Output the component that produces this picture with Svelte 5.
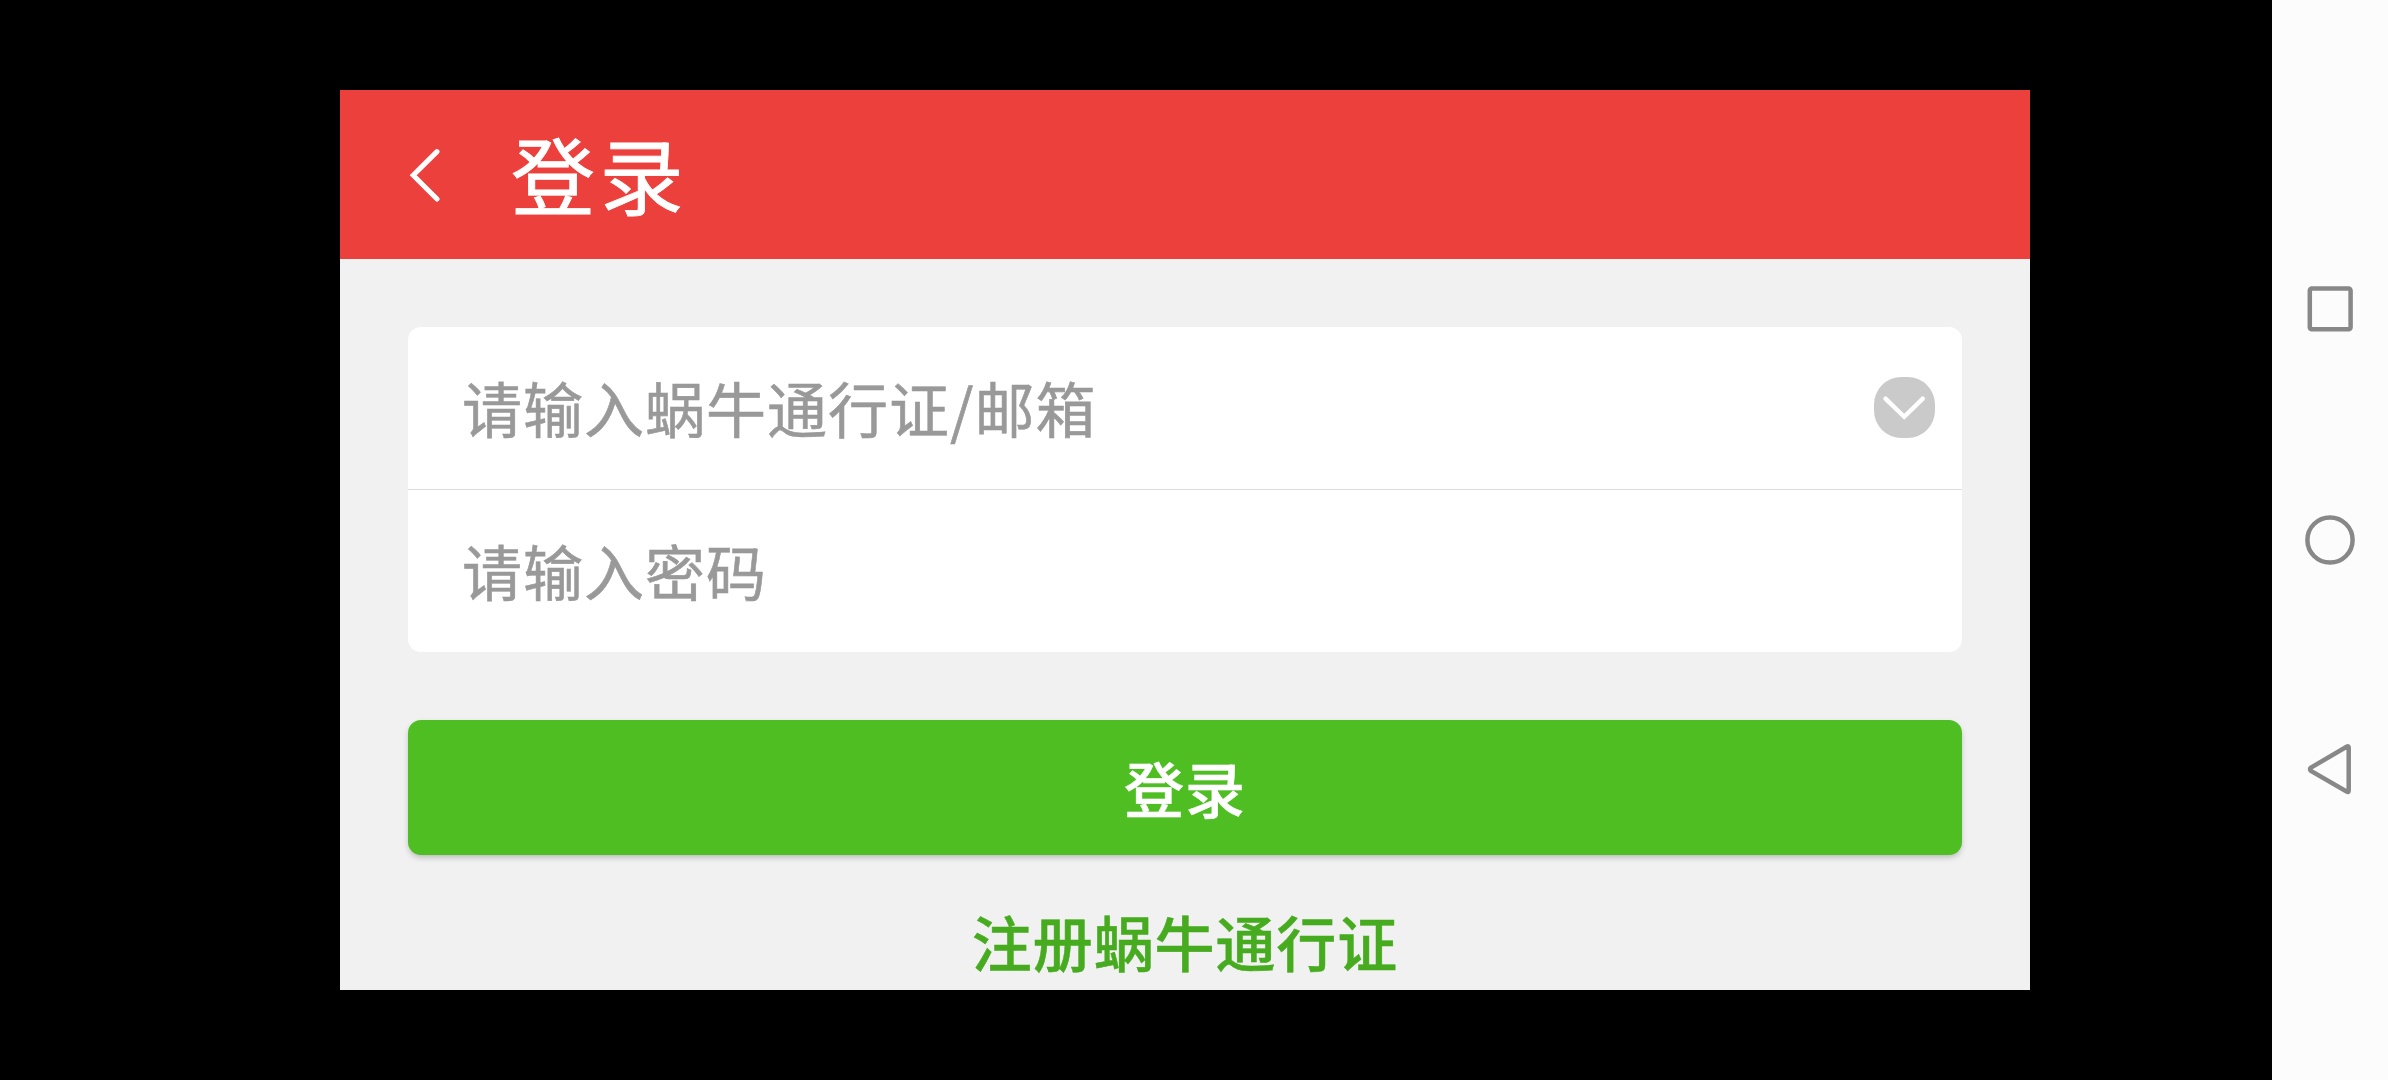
<script>
  let account = $state('');
  let password = $state('');

  /** @param {SubmitEvent} e */
  function handleSubmit(e) {
    e.preventDefault();
  }
</script>

<div class="screen">
  <div class="stage">
    <main class="dialog">
      <header class="titlebar">
        <button type="button" class="back" aria-label="返回">
          <svg width="32" height="56" viewBox="0 0 32 56">
            <path d="M29 4.6 L5.2 28.2 L29 52" />
          </svg>
        </button>
        <h1>登录</h1>
      </header>

      <form onsubmit={handleSubmit} novalidate>
        <div class="card">
          <div class="field">
            <input type="text" bind:value={account} placeholder="请输入蜗牛通行证/邮箱" />
            <button type="button" class="toggle" aria-label="历史账号">
              <svg width="61" height="61" viewBox="0 0 61 61">
                <rect width="61" height="61" rx="27.5" />
                <path d="M11.5 21.7 L30.2 39.8 L48.8 21.7" />
              </svg>
            </button>
          </div>
          <div class="field">
            <input type="password" bind:value={password} placeholder="请输入密码" />
          </div>
        </div>

        <button type="submit" class="submit">登录</button>
        <a class="register" href="#register">注册蜗牛通行证</a>
      </form>
    </main>
  </div>

  <!-- system navigation -->
  <nav class="sysnav">
    <svg width="52" height="52" viewBox="0 0 52 52">
      <rect x="5.8" y="4.5" width="40.8" height="40.8" rx="2" />
    </svg>
    <svg width="52" height="52" viewBox="0 0 52 52">
      <circle cx="26" cy="26" r="22.6" />
    </svg>
    <svg width="52" height="52" viewBox="0 0 52 52">
      <path d="M43 2.6 Q44.7 1.8 44.7 3.6 V46.8 Q44.7 48.6 43 47.8 L7 27 Q5 25.2 7 23.6 Z" />
    </svg>
  </nav>
</div>

<style>
  :global(*, *::before, *::after) { box-sizing: border-box; margin: 0; padding: 0; }

  :global(body) {
    background: #000;
    overflow: hidden;
    font-family: 'Noto Sans CJK SC', sans-serif;
  }

  svg { display: block; }

  button {
    border: 0;
    background: none;
    font-family: inherit;
    cursor: pointer;
  }

  .screen {
    display: flex;
    height: 1080px;
    background: #000;
  }

  .stage {
    flex: 1;
    padding: 90px 0 90px 340px;
  }

  .dialog {
    width: 1690px;
    height: 900px;
    background: #f1f1f1;
    overflow: hidden;
  }

  /* Title bar */
  .titlebar {
    display: flex;
    align-items: center;
    gap: 71px;
    height: 169px;
    padding-left: 68px;
    background: #eb403c;
    color: #fff;
  }

  .back path {
    fill: none;
    stroke: #fff;
    stroke-width: 5;
    stroke-linecap: round;
  }

  h1 {
    padding-bottom: 3px;
    font-size: 84px;
    font-weight: 400;
    line-height: 166px;
    letter-spacing: 4.5px;
    -webkit-text-stroke: 0.8px currentColor;
  }

  /* Form */
  form {
    display: flex;
    flex-direction: column;
    padding: 68px 68px 0;
  }

  .card {
    height: 325px;
    border-radius: 13px;
    background: #fff;
    overflow: hidden;
  }

  .field {
    display: flex;
    align-items: center;
    height: 162px;
    padding: 0 27px 1px 54px;
  }

  .field + .field {
    height: 163px;
    border-top: 1px solid #dcdddd;
  }

  input {
    flex: 1;
    height: 100%;
    padding-bottom: 2px;
    border: 0;
    outline: none;
    background: transparent;
    color: #333;
    font-family: inherit;
    font-size: 60px;
    letter-spacing: 1px;
  }

  input::placeholder {
    color: #999;
    opacity: 1;
    -webkit-text-stroke: 0.6px #999;
  }

  .toggle rect { fill: #cacaca; }

  .toggle path {
    fill: none;
    stroke: #fff;
    stroke-width: 4.4;
    stroke-linecap: round;
  }

  .submit {
    height: 135px;
    margin-top: 68px;
    padding-bottom: 3px;
    border-radius: 13px;
    background: #4fbe23;
    box-shadow: 0 3px 6px -1px rgba(0, 0, 0, 0.25);
    color: #fff;
    font-size: 60px;
    font-weight: 500;
    letter-spacing: 1px;
    -webkit-text-stroke: 0.5px currentColor;
  }

  .register {
    margin-top: 42px;
    color: #47ab1f;
    font-size: 60px;
    font-weight: 500;
    line-height: 88px;
    letter-spacing: 0.9px;
    text-align: center;
    text-decoration: none;
    -webkit-text-stroke: 0.5px currentColor;
  }

  /* System navigation */
  .sysnav {
    display: flex;
    flex-direction: column;
    align-items: center;
    justify-content: center;
    gap: 178px;
    width: 116px;
    background: #fcfcfc;
  }

  .sysnav svg {
    fill: none;
    stroke: #888;
    stroke-width: 4.5;
  }
</style>
